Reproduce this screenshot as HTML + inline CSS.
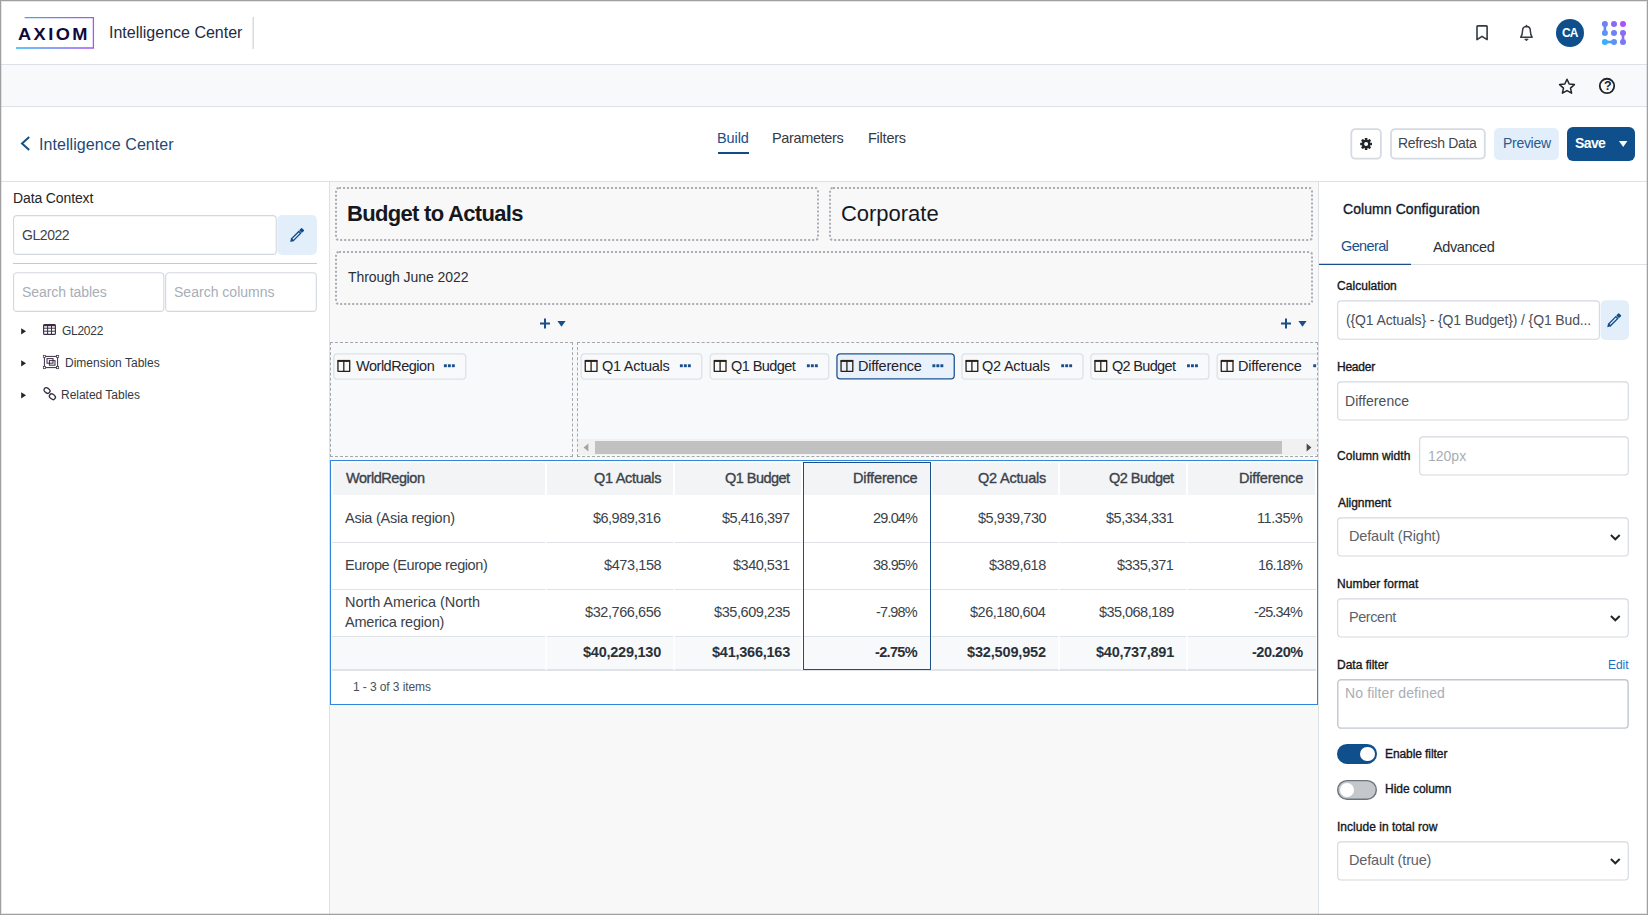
<!DOCTYPE html>
<html lang="en"><head><meta charset="utf-8"><title>Intelligence Center</title>
<style>
html,body{margin:0;padding:0}
body{width:1648px;height:915px;overflow:hidden;position:relative;background:#fff;font-family:"Liberation Sans", sans-serif}
svg{position:absolute;overflow:visible}

.bx{position:absolute;box-sizing:border-box}
.inp{position:absolute;box-sizing:border-box;border:1.2px solid #d6dae1;border-radius:4px;background:#fff}
.dot{position:absolute;box-sizing:border-box;border:2px dotted #a9adb4;border-radius:4px}
.dash{position:absolute;box-sizing:border-box;border:1px dashed #a4a8ae}
.chip{position:absolute;box-sizing:border-box;border:1.2px solid #dde1e8;border-radius:4px;background:#f8f9fb;height:27px;top:353px}
.hl{position:absolute;height:1px;background:#dee2e6}
.vl{position:absolute;width:1px;background:#dee2e6}

</style></head><body>
<div class="bx" style="left:0;top:65px;width:1648px;height:42px;background:#f8f9fb"></div>
<div class="bx" style="left:330px;top:182px;width:989px;height:733px;background:#f8f8f9"></div>
<div class="hl" style="left:0;top:64px;width:1648px;background:#dce1e7"></div>
<div class="hl" style="left:0;top:106px;width:1648px;background:#dce1e7"></div>
<div class="hl" style="left:0;top:181px;width:1648px;background:#dce1e7"></div>
<div class="vl" style="left:329px;top:182px;height:733px;background:#dce1e7"></div>
<div class="vl" style="left:1318px;top:182px;height:733px;background:#dce1e7"></div>
<svg style="left:14px;top:15px" width="84" height="36" viewBox="14 15 84 36">
<defs><linearGradient id="lg1" x1="16" y1="0" x2="94" y2="0" gradientUnits="userSpaceOnUse"><stop offset="0" stop-color="#2bb5f0"/><stop offset="0.55" stop-color="#6f7df5"/><stop offset="1" stop-color="#a855f7"/></linearGradient></defs>
<path d="M24.6 17.6 H93.4 V48 H16" fill="none" stroke="url(#lg1)" stroke-width="1.3"/>
</svg>
<span style="position:absolute;left:18px;top:23px;font-size:17px;line-height:24px;font-weight:700;color:#0f0a3c;white-space:nowrap;letter-spacing:2.300px;display:inline-block;transform:scaleX(1.07);transform-origin:0 0;">AXIOM</span>
<span style="position:absolute;left:109px;top:22px;font-size:16px;line-height:22px;font-weight:400;color:#1f2a44;white-space:nowrap;letter-spacing:0.000px;">Intelligence Center</span>
<svg style="left:252px;top:17px" width="3" height="33"><rect x="0.5" y="0" width="1.4" height="32" rx="0" fill="#d3d8df"/></svg>
<svg style="left:1474px;top:24px" width="16" height="18" viewBox="1474 24 16 18"><path d="M1477 26.6 a0.7 0.7 0 0 1 0.7 -0.7 H1486.4 a0.7 0.7 0 0 1 0.7 0.7 V39.6 L1482.05 36.3 L1477 39.6 Z" fill="none" stroke="#343a40" stroke-width="1.6" stroke-linejoin="round"/></svg>
<svg style="left:1518px;top:24px" width="18" height="18" viewBox="1518 24 18 18"><path d="M1526.45 26.6 C1523.7 26.6 1522.5 28.8 1522.5 31.2 C1522.5 34.4 1521.6 35.9 1520.7 37.3 H1532.2 C1531.3 35.9 1530.4 34.4 1530.4 31.2 C1530.4 28.8 1529.2 26.6 1526.45 26.6 Z" fill="none" stroke="#343a40" stroke-width="1.5" stroke-linejoin="round"/><path d="M1526.45 25.6 V26.8" stroke="#343a40" stroke-width="1.6" stroke-linecap="round"/><path d="M1524.6 39 H1528.3 L1526.45 40.9 Z" fill="#343a40" stroke="#343a40" stroke-width="0.6" stroke-linejoin="round"/></svg>
<div class="bx" style="left:1556px;top:19px;width:28px;height:28px;border-radius:14px;background:#0f4f8c"></div>
<span style="position:absolute;left:1562px;top:25px;font-size:12px;line-height:17px;font-weight:700;color:#fff;white-space:nowrap;letter-spacing:-0.800px;">CA</span>
<svg style="left:0;top:0" width="1648" height="64" viewBox="0 0 1648 64"><defs><linearGradient id="lgA" x1="0" y1="24" x2="0" y2="33" gradientUnits="userSpaceOnUse"><stop offset="0" stop-color="#6f80f6"/><stop offset="1" stop-color="#5b93f5"/></linearGradient><linearGradient id="lgB" x1="0" y1="33" x2="0" y2="42" gradientUnits="userSpaceOnUse"><stop offset="0" stop-color="#8b6cf2"/><stop offset="1" stop-color="#7a78f3"/></linearGradient><linearGradient id="lgC" x1="1605" y1="0" x2="1614" y2="0" gradientUnits="userSpaceOnUse"><stop offset="0" stop-color="#38b0f8"/><stop offset="1" stop-color="#5b93f3"/></linearGradient></defs><circle cx="1604.9" cy="24" r="3" fill="#6f80f6"/><circle cx="1614" cy="24" r="3" fill="#8a6af5"/><circle cx="1623" cy="24" r="3" fill="#a855f7"/><circle cx="1604.9" cy="32.9" r="3" fill="#5b93f5"/><circle cx="1614" cy="32.9" r="3" fill="#7080f5"/><circle cx="1623" cy="32.9" r="3" fill="#8b6cf2"/><circle cx="1604.9" cy="42" r="3" fill="#38b0f8"/><circle cx="1614" cy="42" r="3" fill="#5b93f3"/><circle cx="1623" cy="42" r="3" fill="#7a78f3"/><path d="M1604.9 24 V32.9" stroke="url(#lgA)" stroke-width="2.6"/><path d="M1623 32.9 V42" stroke="url(#lgB)" stroke-width="2.6"/><path d="M1604.9 42 H1614" stroke="url(#lgC)" stroke-width="2.6"/></svg>
<svg style="left:1557px;top:76px" width="20" height="20" viewBox="1557 76 20 20"><path d="M1567 79.2 L1569.2 84 L1574.4 84.6 L1570.5 88.1 L1571.6 93.2 L1567 90.6 L1562.4 93.2 L1563.5 88.1 L1559.6 84.6 L1564.8 84 Z" fill="none" stroke="#212529" stroke-width="1.5" stroke-linejoin="round"/></svg>
<svg style="left:1597px;top:76px" width="20" height="20" viewBox="1597 76 20 20"><circle cx="1607" cy="85.95" r="7.2" fill="none" stroke="#212529" stroke-width="1.8"/></svg>
<span style="position:absolute;left:1604px;top:77px;font-size:12.5px;line-height:18px;font-weight:700;color:#212529;white-space:nowrap;letter-spacing:0.000px;">?</span>
<svg style="left:18px;top:134px" width="14" height="20" viewBox="18 134 14 20"><path d="M29.2 136.9 L22 143.5 L29.2 150.1" fill="none" stroke="#1b4f80" stroke-width="2"/></svg>
<span style="position:absolute;left:39px;top:134px;font-size:16px;line-height:22px;font-weight:400;color:#1b4a78;white-space:nowrap;letter-spacing:0.067px;">Intelligence Center</span>
<span style="position:absolute;left:717px;top:128px;font-size:14.5px;line-height:20px;font-weight:400;color:#1b4f8a;white-space:nowrap;letter-spacing:-0.100px;">Build</span>
<div class="bx" style="left:718.3px;top:152px;width:30.5px;height:2px;background:#0f4c8a"></div>
<span style="position:absolute;left:772px;top:128px;font-size:14.5px;line-height:20px;font-weight:400;color:#343a40;white-space:nowrap;letter-spacing:-0.356px;">Parameters</span>
<span style="position:absolute;left:868px;top:128px;font-size:14.5px;line-height:20px;font-weight:400;color:#343a40;white-space:nowrap;letter-spacing:-0.233px;">Filters</span>
<svg style="left:1350px;top:128px" width="33" height="33"><rect x="1.3" y="1.1" width="29.6" height="29.6" rx="4.1" fill="#fff" stroke="#d6dae2" stroke-width="1.8"/></svg>
<svg style="left:1359px;top:137px" width="14" height="14" viewBox="-7.1 -7 14 14"><circle r="3.15" fill="none" stroke="#212529" stroke-width="2.3"/><rect x="-1.3" y="-5.9" width="2.6" height="2.6" rx="0.3" fill="#212529" transform="rotate(0)"/><rect x="-1.3" y="-5.9" width="2.6" height="2.6" rx="0.3" fill="#212529" transform="rotate(45)"/><rect x="-1.3" y="-5.9" width="2.6" height="2.6" rx="0.3" fill="#212529" transform="rotate(90)"/><rect x="-1.3" y="-5.9" width="2.6" height="2.6" rx="0.3" fill="#212529" transform="rotate(135)"/><rect x="-1.3" y="-5.9" width="2.6" height="2.6" rx="0.3" fill="#212529" transform="rotate(180)"/><rect x="-1.3" y="-5.9" width="2.6" height="2.6" rx="0.3" fill="#212529" transform="rotate(225)"/><rect x="-1.3" y="-5.9" width="2.6" height="2.6" rx="0.3" fill="#212529" transform="rotate(270)"/><rect x="-1.3" y="-5.9" width="2.6" height="2.6" rx="0.3" fill="#212529" transform="rotate(315)"/></svg>
<svg style="left:1390px;top:128px" width="97" height="33"><rect x="1" y="1.1" width="93.8" height="29.6" rx="4.1" fill="#fff" stroke="#d6dae2" stroke-width="1.8"/></svg>
<span style="position:absolute;left:1398px;top:133px;font-size:14px;line-height:20px;font-weight:400;color:#3f464e;white-space:nowrap;letter-spacing:-0.327px;">Refresh Data</span>
<svg style="left:1494px;top:128px" width="66" height="33"><rect x="0" y="0" width="64.8" height="31.9" rx="5" fill="#e3eefb"/></svg>
<span style="position:absolute;left:1503px;top:133px;font-size:14px;line-height:20px;font-weight:400;color:#2a5a8f;white-space:nowrap;letter-spacing:-0.300px;">Preview</span>
<svg style="left:1567px;top:127px" width="69" height="36"><rect x="0" y="0.1" width="68" height="34" rx="6" fill="#0f4f8c"/></svg>
<span style="position:absolute;left:1575px;top:133px;font-size:14px;line-height:20px;font-weight:700;color:#fff;white-space:nowrap;letter-spacing:-0.600px;">Save</span>
<svg style="left:1619px;top:141px" width="8.4" height="6" viewBox="0 0 8.4 6"><path d="M0 0 H8.4 L4.2 6 Z" fill="#fff"/></svg>
<span style="position:absolute;left:13px;top:188px;font-size:14px;line-height:20px;font-weight:400;color:#212529;white-space:nowrap;letter-spacing:-0.127px;">Data Context</span>
<svg style="left:13px;top:215px" width="265" height="41"><rect x="0.55" y="0.65" width="262.7" height="38.7" rx="3.45" fill="#fff" stroke="#d3d8e0" stroke-width="1.1"/></svg>
<span style="position:absolute;left:22px;top:225px;font-size:14px;line-height:20px;font-weight:400;color:#3d444d;white-space:nowrap;letter-spacing:-0.440px;">GL2022</span>
<svg style="left:277px;top:215px" width="41" height="41"><rect x="0.3" y="0" width="39.6" height="39.9" rx="5" fill="#e3eefb"/></svg>
<svg style="left:0;top:0" width="1648" height="915" viewBox="0 0 1648 915"><g transform="translate(290.1 242) rotate(-45)" fill="#0f4c8a"><path d="M0 0 L3.3 -1.95 V1.95 Z"/><rect x="3.3" y="-1.3" width="10.3" height="2.6" fill="none" stroke="#0f4c8a" stroke-width="1.3"/><rect x="14.7" y="-1.95" width="3.5" height="3.9" rx="0.6"/></g></svg>
<div class="hl" style="left:13px;top:263px;width:304px;background:#c9c9c9"></div>
<svg style="left:13px;top:272px" width="153" height="41"><rect x="0.55" y="0.75" width="150.3" height="38.6" rx="3.45" fill="#fff" stroke="#d3d8e0" stroke-width="1.1"/></svg>
<svg style="left:165px;top:272px" width="153" height="41"><rect x="0.65" y="0.75" width="150.7" height="38.6" rx="3.45" fill="#fff" stroke="#d3d8e0" stroke-width="1.1"/></svg>
<span style="position:absolute;left:22px;top:282px;font-size:14px;line-height:20px;font-weight:400;color:#a8aeb6;white-space:nowrap;letter-spacing:-0.067px;">Search tables</span>
<span style="position:absolute;left:174px;top:282px;font-size:14px;line-height:20px;font-weight:400;color:#a8aeb6;white-space:nowrap;letter-spacing:0.015px;">Search columns</span>
<svg style="left:21.3px;top:327.5px" width="5.2" height="6.6" viewBox="0 0 5.2 6.6"><path d="M0.2 0.2 L5 3.3 L0.2 6.4 Z" fill="#212529"/></svg>
<svg style="left:21.3px;top:359.5px" width="5.2" height="6.6" viewBox="0 0 5.2 6.6"><path d="M0.2 0.2 L5 3.3 L0.2 6.4 Z" fill="#212529"/></svg>
<svg style="left:21.3px;top:391.5px" width="5.2" height="6.6" viewBox="0 0 5.2 6.6"><path d="M0.2 0.2 L5 3.3 L0.2 6.4 Z" fill="#212529"/></svg>
<svg style="left:43px;top:324.4px" width="13" height="11" viewBox="0 0 13 11"><rect x="0.6" y="0.6" width="11.8" height="9.8" rx="1" fill="none" stroke="#3a2d45" stroke-width="1.1"/><path d="M0.6 1.4 H12.4" stroke="#3a2d45" stroke-width="1.6"/><path d="M0.6 4.2 H12.4 M0.6 7.2 H12.4 M4.6 0.6 V10.4 M8.5 0.6 V10.4" stroke="#3a2d45" stroke-width="1"/></svg>
<span style="position:absolute;left:62px;top:323px;font-size:12px;line-height:17px;font-weight:400;color:#343a40;white-space:nowrap;letter-spacing:-0.280px;">GL2022</span>
<svg style="left:43px;top:355px" width="16" height="14" viewBox="0 0 16 14"><rect x="1.4" y="1.4" width="13.2" height="11.2" fill="none" stroke="#3a2d45" stroke-width="1"/><rect x="0.3" y="0.3" width="2.2" height="2.2" fill="#fff" stroke="#3a2d45" stroke-width="0.7"/><rect x="13.5" y="0.3" width="2.2" height="2.2" fill="#fff" stroke="#3a2d45" stroke-width="0.7"/><rect x="0.3" y="11.5" width="2.2" height="2.2" fill="#fff" stroke="#3a2d45" stroke-width="0.7"/><rect x="13.5" y="11.5" width="2.2" height="2.2" fill="#fff" stroke="#3a2d45" stroke-width="0.7"/><rect x="4" y="3.6" width="6" height="4.6" fill="none" stroke="#3a2d45" stroke-width="1"/><rect x="6.4" y="5.6" width="5.6" height="4.6" fill="none" stroke="#3a2d45" stroke-width="1"/></svg>
<span style="position:absolute;left:65px;top:355px;font-size:12px;line-height:17px;font-weight:400;color:#343a40;white-space:nowrap;letter-spacing:0.013px;">Dimension Tables</span>
<svg style="left:43px;top:387px" width="14" height="14" viewBox="0 0 14 14"><rect x="0.8" y="1.2" width="6.4" height="4.6" rx="2.3" transform="rotate(38 4 3.5)" fill="none" stroke="#3a2d45" stroke-width="1.3"/><rect x="6.2" y="7.4" width="6.4" height="4.6" rx="2.3" transform="rotate(38 9.4 9.7)" fill="none" stroke="#3a2d45" stroke-width="1.3"/></svg>
<span style="position:absolute;left:61px;top:387px;font-size:12px;line-height:17px;font-weight:400;color:#343a40;white-space:nowrap;letter-spacing:-0.015px;">Related Tables</span>
<div class="dot" style="left:335px;top:187px;width:484px;height:54px"></div>
<div class="dot" style="left:829px;top:187px;width:484px;height:54px"></div>
<div class="dot" style="left:335px;top:251px;width:978px;height:54px"></div>
<span style="position:absolute;left:347px;top:198px;font-size:22px;line-height:31px;font-weight:700;color:#16181d;white-space:nowrap;letter-spacing:-0.688px;">Budget to Actuals</span>
<span style="position:absolute;left:841px;top:198px;font-size:22px;line-height:31px;font-weight:400;color:#16181d;white-space:nowrap;letter-spacing:-0.025px;">Corporate</span>
<span style="position:absolute;left:348px;top:267px;font-size:14px;line-height:20px;font-weight:400;color:#2b2f36;white-space:nowrap;letter-spacing:-0.062px;">Through June 2022</span>
<svg style="left:540px;top:318px" width="28" height="11" viewBox="0 0 28 11"><path d="M5 0.5 V10.5 M0 5.5 H10" stroke="#1b4f8a" stroke-width="2"/><path d="M17.4 3 H25.6 L21.5 8.8 Z" fill="#1b4f8a"/></svg>
<svg style="left:1281px;top:318px" width="28" height="11" viewBox="0 0 28 11"><path d="M5 0.5 V10.5 M0 5.5 H10" stroke="#1b4f8a" stroke-width="2"/><path d="M17.4 3 H25.6 L21.5 8.8 Z" fill="#1b4f8a"/></svg>
<div class="dash" style="left:330px;top:342px;width:243px;height:115px;background:#f8f9fb"></div>
<div class="dash" style="left:577px;top:342px;width:741px;height:115px;background:#f8f9fb"></div>
<svg style="left:333px;top:353px" width="135" height="28"><rect x="0.85" y="0.95" width="131.9" height="25.1" rx="3.35" fill="#f8f9fb" stroke="#dde1e8" stroke-width="1.3"/></svg>
<svg style="left:337px;top:359px" width="16" height="14"><path d="M0.95 1.6 H12.7 V12.3 H0.95 Z" fill="none" stroke="#2a1f17" stroke-width="1.3" stroke-linejoin="round"/><path d="M0.6 1.9 H13.05" stroke="#2a1f17" stroke-width="2"/><path d="M6.8 1.6 V12.3" stroke="#2a1f17" stroke-width="1.3"/></svg>
<span style="position:absolute;left:356px;top:356px;font-size:14.5px;line-height:20px;font-weight:400;color:#1f242b;white-space:nowrap;letter-spacing:-0.480px;">WorldRegion</span>
<svg style="left:443px;top:364px" width="14" height="4"><rect x="0.9" y="0.3" width="2.9" height="2.9" fill="#1b4f8a"/><rect x="4.9" y="0.3" width="2.9" height="2.9" fill="#1b4f8a"/><rect x="8.9" y="0.3" width="2.9" height="2.9" fill="#1b4f8a"/></svg>
<svg style="left:580px;top:353px" width="124" height="28"><rect x="1.15" y="0.95" width="120.6" height="25.1" rx="3.35" fill="#f8f9fb" stroke="#dde1e8" stroke-width="1.3"/></svg>
<svg style="left:584px;top:359px" width="16" height="14"><path d="M1.25 1.6 H13 V12.3 H1.25 Z" fill="none" stroke="#2a1f17" stroke-width="1.3" stroke-linejoin="round"/><path d="M0.9 1.9 H13.35" stroke="#2a1f17" stroke-width="2"/><path d="M7.1 1.6 V12.3" stroke="#2a1f17" stroke-width="1.3"/></svg>
<span style="position:absolute;left:602px;top:356px;font-size:14.5px;line-height:20px;font-weight:400;color:#1f242b;white-space:nowrap;letter-spacing:-0.267px;">Q1 Actuals</span>
<svg style="left:679px;top:364px" width="14" height="4"><rect x="0.9" y="0.3" width="2.9" height="2.9" fill="#1b4f8a"/><rect x="4.9" y="0.3" width="2.9" height="2.9" fill="#1b4f8a"/><rect x="8.9" y="0.3" width="2.9" height="2.9" fill="#1b4f8a"/></svg>
<svg style="left:709px;top:353px" width="122" height="28"><rect x="1.15" y="0.95" width="118.6" height="25.1" rx="3.35" fill="#f8f9fb" stroke="#dde1e8" stroke-width="1.3"/></svg>
<svg style="left:713px;top:359px" width="16" height="14"><path d="M1.25 1.6 H13 V12.3 H1.25 Z" fill="none" stroke="#2a1f17" stroke-width="1.3" stroke-linejoin="round"/><path d="M0.9 1.9 H13.35" stroke="#2a1f17" stroke-width="2"/><path d="M7.1 1.6 V12.3" stroke="#2a1f17" stroke-width="1.3"/></svg>
<span style="position:absolute;left:731px;top:356px;font-size:14.5px;line-height:20px;font-weight:400;color:#1f242b;white-space:nowrap;letter-spacing:-0.575px;">Q1 Budget</span>
<svg style="left:806px;top:364px" width="14" height="4"><rect x="0.9" y="0.3" width="2.9" height="2.9" fill="#1b4f8a"/><rect x="4.9" y="0.3" width="2.9" height="2.9" fill="#1b4f8a"/><rect x="8.9" y="0.3" width="2.9" height="2.9" fill="#1b4f8a"/></svg>
<svg style="left:836px;top:353px" width="120" height="28"><rect x="0.95" y="0.85" width="117.3" height="25.1" rx="3.35" fill="#e9f1fc" stroke="#1f5491" stroke-width="1.3"/></svg>
<svg style="left:840px;top:359px" width="16" height="14"><path d="M1.05 1.6 H12.8 V12.3 H1.05 Z" fill="none" stroke="#2a1f17" stroke-width="1.3" stroke-linejoin="round"/><path d="M0.7 1.9 H13.15" stroke="#2a1f17" stroke-width="2"/><path d="M6.9 1.6 V12.3" stroke="#2a1f17" stroke-width="1.3"/></svg>
<span style="position:absolute;left:858px;top:356px;font-size:14.5px;line-height:20px;font-weight:400;color:#1f242b;white-space:nowrap;letter-spacing:-0.222px;">Difference</span>
<svg style="left:932px;top:364px" width="14" height="4"><rect x="0.4" y="0.3" width="2.9" height="2.9" fill="#1b4f8a"/><rect x="4.4" y="0.3" width="2.9" height="2.9" fill="#1b4f8a"/><rect x="8.4" y="0.3" width="2.9" height="2.9" fill="#1b4f8a"/></svg>
<svg style="left:961px;top:353px" width="124" height="28"><rect x="0.95" y="0.95" width="121.1" height="25.1" rx="3.35" fill="#f8f9fb" stroke="#dde1e8" stroke-width="1.3"/></svg>
<svg style="left:965px;top:359px" width="16" height="14"><path d="M1.05 1.6 H12.8 V12.3 H1.05 Z" fill="none" stroke="#2a1f17" stroke-width="1.3" stroke-linejoin="round"/><path d="M0.7 1.9 H13.15" stroke="#2a1f17" stroke-width="2"/><path d="M6.9 1.6 V12.3" stroke="#2a1f17" stroke-width="1.3"/></svg>
<span style="position:absolute;left:982px;top:356px;font-size:14.5px;line-height:20px;font-weight:400;color:#1f242b;white-space:nowrap;letter-spacing:-0.222px;">Q2 Actuals</span>
<svg style="left:1061px;top:364px" width="14" height="4"><rect x="0.2" y="0.3" width="2.9" height="2.9" fill="#1b4f8a"/><rect x="4.2" y="0.3" width="2.9" height="2.9" fill="#1b4f8a"/><rect x="8.2" y="0.3" width="2.9" height="2.9" fill="#1b4f8a"/></svg>
<svg style="left:1090px;top:353px" width="121" height="28"><rect x="0.85" y="0.95" width="118" height="25.1" rx="3.35" fill="#f8f9fb" stroke="#dde1e8" stroke-width="1.3"/></svg>
<svg style="left:1094px;top:359px" width="16" height="14"><path d="M0.95 1.6 H12.7 V12.3 H0.95 Z" fill="none" stroke="#2a1f17" stroke-width="1.3" stroke-linejoin="round"/><path d="M0.6 1.9 H13.05" stroke="#2a1f17" stroke-width="2"/><path d="M6.8 1.6 V12.3" stroke="#2a1f17" stroke-width="1.3"/></svg>
<span style="position:absolute;left:1112px;top:356px;font-size:14.5px;line-height:20px;font-weight:400;color:#1f242b;white-space:nowrap;letter-spacing:-0.675px;">Q2 Budget</span>
<svg style="left:1187px;top:364px" width="14" height="4"><rect x="0" y="0.3" width="2.9" height="2.9" fill="#1b4f8a"/><rect x="4" y="0.3" width="2.9" height="2.9" fill="#1b4f8a"/><rect x="8" y="0.3" width="2.9" height="2.9" fill="#1b4f8a"/></svg>
<svg style="left:1216px;top:353px;overflow:hidden" width="101" height="28" viewBox="1216 353 101 28"><rect x="1217.15" y="353.95" width="140" height="25.1" rx="3.4" fill="#f8f9fb" stroke="#dde1e8" stroke-width="1.3"/></svg>
<svg style="left:1220px;top:359px" width="16" height="14"><path d="M1.25 1.6 H13 V12.3 H1.25 Z" fill="none" stroke="#2a1f17" stroke-width="1.3" stroke-linejoin="round"/><path d="M0.9 1.9 H13.35" stroke="#2a1f17" stroke-width="2"/><path d="M7.1 1.6 V12.3" stroke="#2a1f17" stroke-width="1.3"/></svg>
<span style="position:absolute;left:1238px;top:356px;font-size:14.5px;line-height:20px;font-weight:400;color:#1f242b;white-space:nowrap;letter-spacing:-0.222px;">Difference</span>
<svg style="left:1311px;top:364px" width="6" height="4" viewBox="0 0 6 4"><rect x="2.2" y="0.3" width="2.9" height="2.9" fill="#1b4f8a"/></svg>
<div class="bx" style="left:578px;top:439px;width:739px;height:16px;background:#f1f1f1"></div>
<div class="bx" style="left:595px;top:441px;width:687px;height:13px;background:#c1c1c1"></div>
<svg style="left:583px;top:443px" width="6" height="9" viewBox="0 0 6 9"><path d="M5.4 0.4 V8.6 L0.6 4.5 Z" fill="#a3a3a3"/></svg>
<svg style="left:1306px;top:443px" width="6" height="9" viewBox="0 0 6 9"><path d="M0.6 0.4 V8.6 L5.4 4.5 Z" fill="#4a4a4a"/></svg>
<div class="bx" style="left:330px;top:460px;width:988px;height:245px;border:1.5px solid #2f86e0;background:#fff"></div>
<div class="bx" style="left:333px;top:463px;width:212px;height:32px;background:#f3f4f6"></div>
<div class="bx" style="left:547px;top:463px;width:126px;height:32px;background:#f3f4f6"></div>
<div class="bx" style="left:675px;top:463px;width:126px;height:32px;background:#f3f4f6"></div>
<div class="bx" style="left:803px;top:463px;width:127px;height:32px;background:#f3f4f6"></div>
<div class="bx" style="left:932px;top:463px;width:126px;height:32px;background:#f3f4f6"></div>
<div class="bx" style="left:1060px;top:463px;width:126px;height:32px;background:#f3f4f6"></div>
<div class="bx" style="left:1188px;top:463px;width:127px;height:32px;background:#f3f4f6"></div>
<div class="bx" style="left:332px;top:637px;width:984px;height:33px;background:#f8f9fa"></div>
<div class="hl" style="left:332px;top:542px;width:984px;background:#dfe2e6"></div>
<div class="hl" style="left:332px;top:589px;width:984px;background:#dfe2e6"></div>
<div class="hl" style="left:332px;top:636px;width:984px;background:#dfe2e6"></div>
<div class="bx" style="left:332px;top:669px;width:984px;height:2px;background:#dfe2e6"></div>
<div class="bx" style="left:545px;top:463px;width:2px;height:207px;background:#fff;opacity:.75"></div>
<div class="bx" style="left:673px;top:463px;width:2px;height:207px;background:#fff;opacity:.75"></div>
<div class="bx" style="left:801px;top:463px;width:2px;height:207px;background:#fff;opacity:.75"></div>
<div class="bx" style="left:930px;top:463px;width:2px;height:207px;background:#fff;opacity:.75"></div>
<div class="bx" style="left:1058px;top:463px;width:2px;height:207px;background:#fff;opacity:.75"></div>
<div class="bx" style="left:1186px;top:463px;width:2px;height:207px;background:#fff;opacity:.75"></div>
<span style="position:absolute;left:346px;top:468px;font-size:14.5px;line-height:20px;font-weight:400;color:#3b424a;white-space:nowrap;letter-spacing:-0.460px;-webkit-text-stroke:0.35px currentColor;">WorldRegion</span>
<span style="position:absolute;left:594px;top:468px;font-size:14.5px;line-height:20px;font-weight:400;color:#3b424a;white-space:nowrap;letter-spacing:-0.289px;-webkit-text-stroke:0.35px currentColor;">Q1 Actuals</span>
<span style="position:absolute;left:725px;top:468px;font-size:14.5px;line-height:20px;font-weight:400;color:#3b424a;white-space:nowrap;letter-spacing:-0.525px;-webkit-text-stroke:0.35px currentColor;">Q1 Budget</span>
<span style="position:absolute;left:853px;top:468px;font-size:14.5px;line-height:20px;font-weight:400;color:#3b424a;white-space:nowrap;letter-spacing:-0.133px;-webkit-text-stroke:0.35px currentColor;">Difference</span>
<span style="position:absolute;left:978px;top:468px;font-size:14.5px;line-height:20px;font-weight:400;color:#3b424a;white-space:nowrap;letter-spacing:-0.200px;-webkit-text-stroke:0.35px currentColor;">Q2 Actuals</span>
<span style="position:absolute;left:1109px;top:468px;font-size:14.5px;line-height:20px;font-weight:400;color:#3b424a;white-space:nowrap;letter-spacing:-0.525px;-webkit-text-stroke:0.35px currentColor;">Q2 Budget</span>
<span style="position:absolute;left:1239px;top:468px;font-size:14.5px;line-height:20px;font-weight:400;color:#3b424a;white-space:nowrap;letter-spacing:-0.178px;-webkit-text-stroke:0.35px currentColor;">Difference</span>
<span style="position:absolute;left:593px;top:508px;font-size:14.5px;line-height:20px;font-weight:400;color:#3b424a;white-space:nowrap;letter-spacing:-0.511px;">$6,989,316</span>
<span style="position:absolute;left:722px;top:508px;font-size:14.5px;line-height:20px;font-weight:400;color:#3b424a;white-space:nowrap;letter-spacing:-0.489px;">$5,416,397</span>
<span style="position:absolute;left:873px;top:508px;font-size:14.5px;line-height:20px;font-weight:400;color:#3b424a;white-space:nowrap;letter-spacing:-0.840px;">29.04%</span>
<span style="position:absolute;left:978px;top:508px;font-size:14.5px;line-height:20px;font-weight:400;color:#3b424a;white-space:nowrap;letter-spacing:-0.444px;">$5,939,730</span>
<span style="position:absolute;left:1106px;top:508px;font-size:14.5px;line-height:20px;font-weight:400;color:#3b424a;white-space:nowrap;letter-spacing:-0.489px;">$5,334,331</span>
<span style="position:absolute;left:1257px;top:508px;font-size:14.5px;line-height:20px;font-weight:400;color:#3b424a;white-space:nowrap;letter-spacing:-0.440px;">11.35%</span>
<span style="position:absolute;left:604px;top:555px;font-size:14.5px;line-height:20px;font-weight:400;color:#3b424a;white-space:nowrap;letter-spacing:-0.400px;">$473,158</span>
<span style="position:absolute;left:733px;top:555px;font-size:14.5px;line-height:20px;font-weight:400;color:#3b424a;white-space:nowrap;letter-spacing:-0.486px;">$340,531</span>
<span style="position:absolute;left:873px;top:555px;font-size:14.5px;line-height:20px;font-weight:400;color:#3b424a;white-space:nowrap;letter-spacing:-0.840px;">38.95%</span>
<span style="position:absolute;left:989px;top:555px;font-size:14.5px;line-height:20px;font-weight:400;color:#3b424a;white-space:nowrap;letter-spacing:-0.457px;">$389,618</span>
<span style="position:absolute;left:1117px;top:555px;font-size:14.5px;line-height:20px;font-weight:400;color:#3b424a;white-space:nowrap;letter-spacing:-0.514px;">$335,371</span>
<span style="position:absolute;left:1258px;top:555px;font-size:14.5px;line-height:20px;font-weight:400;color:#3b424a;white-space:nowrap;letter-spacing:-0.840px;">16.18%</span>
<span style="position:absolute;left:585px;top:602px;font-size:14.5px;line-height:20px;font-weight:400;color:#3b424a;white-space:nowrap;letter-spacing:-0.420px;">$32,766,656</span>
<span style="position:absolute;left:714px;top:602px;font-size:14.5px;line-height:20px;font-weight:400;color:#3b424a;white-space:nowrap;letter-spacing:-0.420px;">$35,609,235</span>
<span style="position:absolute;left:876px;top:602px;font-size:14.5px;line-height:20px;font-weight:400;color:#3b424a;white-space:nowrap;letter-spacing:-0.880px;">-7.98%</span>
<span style="position:absolute;left:970px;top:602px;font-size:14.5px;line-height:20px;font-weight:400;color:#3b424a;white-space:nowrap;letter-spacing:-0.480px;">$26,180,604</span>
<span style="position:absolute;left:1099px;top:602px;font-size:14.5px;line-height:20px;font-weight:400;color:#3b424a;white-space:nowrap;letter-spacing:-0.540px;">$35,068,189</span>
<span style="position:absolute;left:1254px;top:602px;font-size:14.5px;line-height:20px;font-weight:400;color:#3b424a;white-space:nowrap;letter-spacing:-0.867px;">-25.34%</span>
<span style="position:absolute;left:345px;top:508px;font-size:14.5px;line-height:20px;font-weight:400;color:#3b424a;white-space:nowrap;letter-spacing:-0.259px;">Asia (Asia region)</span>
<span style="position:absolute;left:345px;top:555px;font-size:14.5px;line-height:20px;font-weight:400;color:#3b424a;white-space:nowrap;letter-spacing:-0.419px;">Europe (Europe region)</span>
<span style="position:absolute;left:345px;top:592px;font-size:14.5px;line-height:20px;font-weight:400;color:#3b424a;white-space:nowrap;letter-spacing:-0.063px;">North America (North</span>
<span style="position:absolute;left:345px;top:612px;font-size:14.5px;line-height:20px;font-weight:400;color:#3b424a;white-space:nowrap;letter-spacing:-0.214px;">America region)</span>
<span style="position:absolute;left:583px;top:642px;font-size:14.5px;line-height:20px;font-weight:700;color:#2b3138;white-space:nowrap;letter-spacing:-0.240px;">$40,229,130</span>
<span style="position:absolute;left:712px;top:642px;font-size:14.5px;line-height:20px;font-weight:700;color:#2b3138;white-space:nowrap;letter-spacing:-0.240px;">$41,366,163</span>
<span style="position:absolute;left:875px;top:642px;font-size:14.5px;line-height:20px;font-weight:700;color:#2b3138;white-space:nowrap;letter-spacing:-0.680px;">-2.75%</span>
<span style="position:absolute;left:967px;top:642px;font-size:14.5px;line-height:20px;font-weight:700;color:#2b3138;white-space:nowrap;letter-spacing:-0.160px;">$32,509,952</span>
<span style="position:absolute;left:1096px;top:642px;font-size:14.5px;line-height:20px;font-weight:700;color:#2b3138;white-space:nowrap;letter-spacing:-0.240px;">$40,737,891</span>
<span style="position:absolute;left:1252px;top:642px;font-size:14.5px;line-height:20px;font-weight:700;color:#2b3138;white-space:nowrap;letter-spacing:-0.467px;">-20.20%</span>
<span style="position:absolute;left:353px;top:679px;font-size:12px;line-height:17px;font-weight:400;color:#495057;white-space:nowrap;letter-spacing:-0.093px;">1 - 3 of 3 items</span>
<div class="bx" style="left:803px;top:462px;width:128px;height:208px;border:1.3px solid #1b4f8a"></div>
<span style="position:absolute;left:1343px;top:199px;font-size:14px;line-height:20px;font-weight:400;color:#101a30;white-space:nowrap;letter-spacing:0.074px;-webkit-text-stroke:0.35px currentColor;">Column Configuration</span>
<span style="position:absolute;left:1341px;top:236px;font-size:14.5px;line-height:20px;font-weight:400;color:#1b4f8a;white-space:nowrap;letter-spacing:-0.633px;">General</span>
<span style="position:absolute;left:1433px;top:237px;font-size:14.5px;line-height:20px;font-weight:400;color:#2b3138;white-space:nowrap;letter-spacing:-0.400px;">Advanced</span>
<div class="hl" style="left:1319px;top:264px;width:329px;background:#dee2e6"></div>
<div class="bx" style="left:1319px;top:264px;width:92px;height:1px;background:#1b4f8a"></div><div class="bx" style="left:1319px;top:263px;width:92px;height:1px;background:#1b4f8a;opacity:.25"></div>
<span style="position:absolute;left:1337px;top:278px;font-size:12px;line-height:17px;font-weight:400;color:#14171c;white-space:nowrap;letter-spacing:0.040px;-webkit-text-stroke:0.35px currentColor;">Calculation</span>
<svg style="left:1337px;top:300px" width="264" height="41"><rect x="0.65" y="0.85" width="261.7" height="38.4" rx="3.45" fill="#fff" stroke="#d3d8e0" stroke-width="1.1"/></svg>
<span style="position:absolute;left:1346px;top:310px;font-size:14px;line-height:20px;font-weight:400;color:#4a5058;white-space:nowrap;letter-spacing:-0.135px;">({Q1 Actuals} - {Q1 Budget}) / {Q1 Bud...</span>
<svg style="left:1600px;top:300px" width="30" height="41"><rect x="0.6" y="0.2" width="28.3" height="39.7" rx="5" fill="#e3eefb"/></svg>
<svg style="left:0;top:0" width="1648" height="915" viewBox="0 0 1648 915"><g transform="translate(1607.2 327.2) rotate(-45)" fill="#0f4c8a"><path d="M0 0 L3.3 -1.95 V1.95 Z"/><rect x="3.3" y="-1.3" width="10.3" height="2.6" fill="none" stroke="#0f4c8a" stroke-width="1.3"/><rect x="14.7" y="-1.95" width="3.5" height="3.9" rx="0.6"/></g></svg>
<span style="position:absolute;left:1337px;top:359px;font-size:12px;line-height:17px;font-weight:400;color:#14171c;white-space:nowrap;letter-spacing:-0.240px;-webkit-text-stroke:0.35px currentColor;">Header</span>
<svg style="left:1337px;top:381px" width="293" height="41"><rect x="0.65" y="0.85" width="290.6" height="38.2" rx="3.45" fill="#fff" stroke="#d3d8e0" stroke-width="1.1"/></svg>
<span style="position:absolute;left:1345px;top:391px;font-size:14px;line-height:20px;font-weight:400;color:#4a5058;white-space:nowrap;letter-spacing:0.067px;">Difference</span>
<span style="position:absolute;left:1337px;top:448px;font-size:12px;line-height:17px;font-weight:400;color:#14171c;white-space:nowrap;letter-spacing:0.055px;-webkit-text-stroke:0.35px currentColor;">Column width</span>
<svg style="left:1419px;top:436px" width="211" height="41"><rect x="0.65" y="0.85" width="208.6" height="38.1" rx="3.45" fill="#fff" stroke="#d3d8e0" stroke-width="1.1"/></svg>
<span style="position:absolute;left:1428px;top:446px;font-size:14px;line-height:20px;font-weight:400;color:#a8aeb6;white-space:nowrap;letter-spacing:0.000px;">120px</span>
<span style="position:absolute;left:1338px;top:495px;font-size:12px;line-height:17px;font-weight:400;color:#14171c;white-space:nowrap;letter-spacing:-0.050px;-webkit-text-stroke:0.35px currentColor;">Alignment</span>
<svg style="left:1337px;top:517px" width="293" height="41"><rect x="0.65" y="0.85" width="290.6" height="38.2" rx="3.45" fill="#fff" stroke="#d3d8e0" stroke-width="1.1"/></svg>
<span style="position:absolute;left:1349px;top:526px;font-size:14.5px;line-height:20px;font-weight:400;color:#5c636b;white-space:nowrap;letter-spacing:-0.157px;">Default (Right)</span>
<svg style="left:1609.7px;top:534.2px" width="10.6" height="7" viewBox="0 0 10.6 7"><path d="M0.9 1 L5.3 5.3 L9.7 1" fill="none" stroke="#212529" stroke-width="1.9"/></svg>
<span style="position:absolute;left:1337px;top:576px;font-size:12px;line-height:17px;font-weight:400;color:#14171c;white-space:nowrap;letter-spacing:0.117px;-webkit-text-stroke:0.35px currentColor;">Number format</span>
<svg style="left:1337px;top:598px" width="293" height="41"><rect x="0.65" y="0.85" width="290.6" height="38.2" rx="3.45" fill="#fff" stroke="#d3d8e0" stroke-width="1.1"/></svg>
<span style="position:absolute;left:1349px;top:607px;font-size:14.5px;line-height:20px;font-weight:400;color:#5c636b;white-space:nowrap;letter-spacing:-0.433px;">Percent</span>
<svg style="left:1609.7px;top:615.2px" width="10.6" height="7" viewBox="0 0 10.6 7"><path d="M0.9 1 L5.3 5.3 L9.7 1" fill="none" stroke="#212529" stroke-width="1.9"/></svg>
<span style="position:absolute;left:1337px;top:657px;font-size:12px;line-height:17px;font-weight:400;color:#14171c;white-space:nowrap;letter-spacing:0.000px;-webkit-text-stroke:0.35px currentColor;">Data filter</span>
<span style="position:absolute;left:1608px;top:657px;font-size:12px;line-height:17px;font-weight:400;color:#1f6fc4;white-space:nowrap;letter-spacing:-0.067px;">Edit</span>
<svg style="left:1337px;top:679px" width="293" height="51"><rect x="0.8" y="0.8" width="290.3" height="48.3" rx="3.3" fill="#fff" stroke="#c0c7cf" stroke-width="1.4"/></svg>
<span style="position:absolute;left:1345px;top:683px;font-size:14px;line-height:20px;font-weight:400;color:#a8aeb6;white-space:nowrap;letter-spacing:0.113px;">No filter defined</span>
<svg style="left:1337px;top:743px" width="41" height="22"><rect x="0" y="0.9" width="40" height="20" rx="10" fill="#0f4f8c"/></svg>
<div class="bx" style="left:1359.9px;top:746.5px;width:14.8px;height:14.8px;border-radius:7.4px;background:#fff"></div>
<span style="position:absolute;left:1385px;top:746px;font-size:12px;line-height:17px;font-weight:400;color:#14171c;white-space:nowrap;letter-spacing:-0.083px;-webkit-text-stroke:0.35px currentColor;">Enable filter</span>
<svg style="left:1337px;top:779px" width="41" height="22"><rect x="0.7" y="1.6" width="38.6" height="18.6" rx="9.3" fill="#c4c8cd" stroke="#6c737b" stroke-width="1.4"/></svg>
<div class="bx" style="left:1339.5px;top:782.5px;width:14.8px;height:14.8px;border-radius:7.4px;background:#fff"></div>
<span style="position:absolute;left:1385px;top:781px;font-size:12px;line-height:17px;font-weight:400;color:#14171c;white-space:nowrap;letter-spacing:-0.020px;-webkit-text-stroke:0.35px currentColor;">Hide column</span>
<span style="position:absolute;left:1337px;top:819px;font-size:12px;line-height:17px;font-weight:400;color:#14171c;white-space:nowrap;letter-spacing:0.021px;-webkit-text-stroke:0.35px currentColor;">Include in total row</span>
<svg style="left:1337px;top:841px" width="293" height="41"><rect x="0.65" y="0.85" width="290.6" height="38.2" rx="3.45" fill="#fff" stroke="#d3d8e0" stroke-width="1.1"/></svg>
<span style="position:absolute;left:1349px;top:850px;font-size:14.5px;line-height:20px;font-weight:400;color:#5c636b;white-space:nowrap;letter-spacing:-0.169px;">Default (true)</span>
<svg style="left:1609.7px;top:858.2px" width="10.6" height="7" viewBox="0 0 10.6 7"><path d="M0.9 1 L5.3 5.3 L9.7 1" fill="none" stroke="#212529" stroke-width="1.9"/></svg>
<div class="bx" style="left:0;top:0;width:1648px;height:915px;border:1px solid #a0a0a0;box-shadow:inset 0 0 0 1px rgba(150,156,168,0.25);pointer-events:none"></div>
</body></html>
